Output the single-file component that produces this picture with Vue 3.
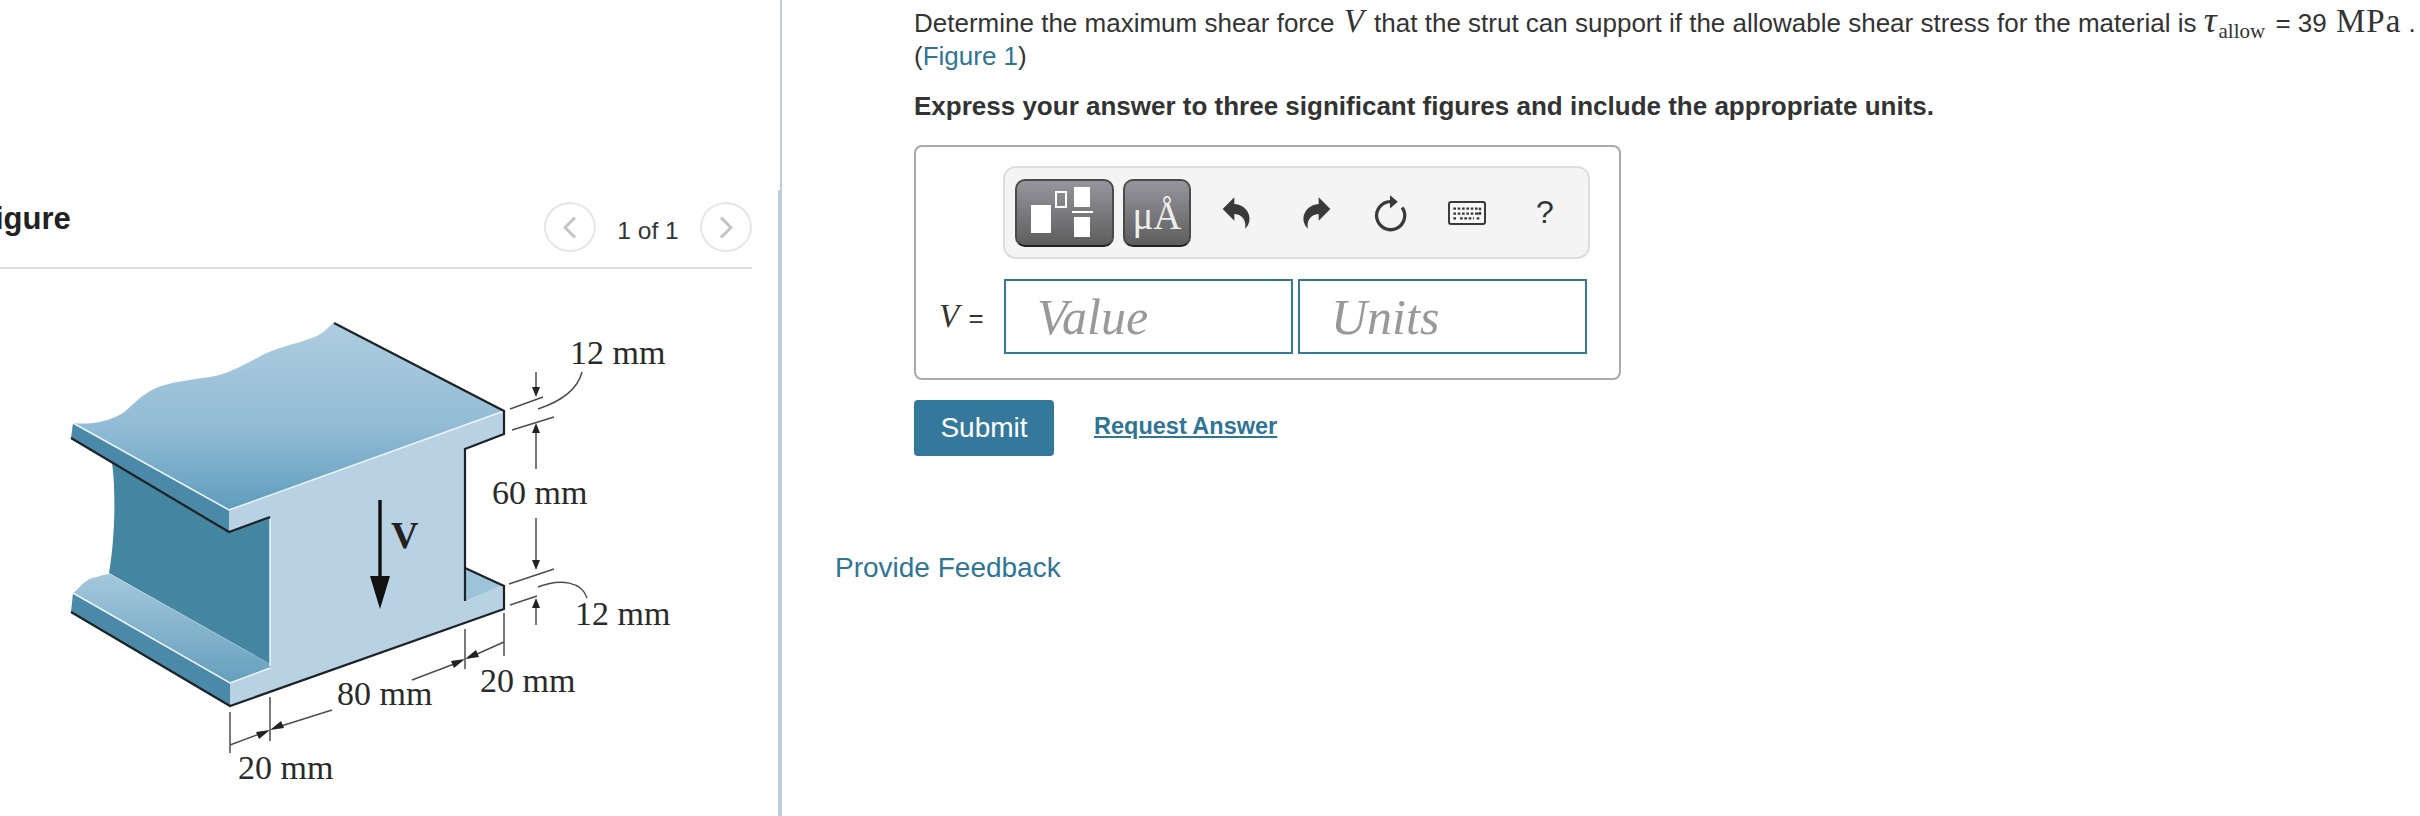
<template>
  <div class="page">
    <div class="left">
      <div class="pane">
        <div class="fig-head">
          <h2 class="fig-title">Figure</h2>
          <button class="nav prev">
            <svg width="14" height="23" viewBox="0 0 14 23"><path d="M12 1.5 2 11.5l10 10" /></svg>
          </button>
          <span class="counter">1 of 1</span>
          <button class="nav">
            <svg width="14" height="23" viewBox="0 0 14 23"><path d="M2 1.5l10 10-10 10" /></svg>
          </button>
        </div>

        <svg class="strut" width="752" height="547" viewBox="0 269 752 547">
          <defs>
            <linearGradient id="topFace" x1="0" y1="0" x2="0" y2="1">
              <stop offset="0" stop-color="#aecde0" />
              <stop offset="0.55" stop-color="#92bcd5" />
              <stop offset="1" stop-color="#5f9dbd" />
            </linearGradient>
            <linearGradient id="lowFace" x1="0" y1="0" x2="0" y2="1">
              <stop offset="0" stop-color="#a4c8dc" />
              <stop offset="1" stop-color="#659fbd" />
            </linearGradient>
          </defs>

          <!-- shaded web -->
          <path d="M112 463C116 490 115 540 109 573L270 664V517L229 532Z" fill="#44859f" />
          <!-- flange edges -->
          <path d="M73 423 229 510V532L71 438Z" fill="#4a8aa8" />
          <path d="M73 593 230 683V706L71 612Z" fill="#4a8aa8" />
          <!-- top face -->
          <path
            d="M73 423C90 425 108 422 123 413C133 405 138 398 150 391C165 382 190 380 210 377C225 375 240 367 257 358C275 347 295 345 317 336C324 332 328 328 333 323L504 411 229 510Z"
            fill="url(#topFace)"
          />
          <!-- lower flange face -->
          <path d="M73 593C80 588 85 578 97 577C102 575 106 574 110 574L270 664V669L230 683Z" fill="url(#lowFace)" />
          <path d="M465 568 504 586 465 603Z" fill="#9cc3da" />
          <!-- front -->
          <path
            d="M229 510 504 411V434L465 449V601L504 584V609L230 706V683L270 668V517L229 532Z"
            fill="#b8d1e3"
          />
          <path class="white-line" d="M73 423 229 510 504 411" />
          <path class="white-line" d="M73 593 230 683 270 668" />
          <path class="white-line" d="M270 519V666" />
          <path class="black-line" d="M71 438 229 532 270 517" />
          <path class="black-line" d="M334 323 504 411V434L465 449V601" />
          <path class="black-line" d="M465 568 504 586V609L230 706 71 612" />

          <!-- shear arrow -->
          <path d="M380 500V580" stroke="#111" stroke-width="3.4" />
          <path d="M370 576H390L380 609Z" fill="#111" />
          <text class="bold-v" x="391" y="548">V</text>

          <!-- dimension lines -->
          <g class="dim">
            <path d="M510 409 543 397M512 430 554 417M536 372V392M536 430V469M536 518V563M509 584 554 569M510 605 537 596M536 605V625" />
            <path d="M582 372C577 392 556 403 538 409M538 587C561 578 582 582 587 598" />
            <path d="M465 629V669M504 613V656M412 680 454 664M468 658 504 642M230 712V753M270 697V741M230 745 262 733M278 727 332 710" />
          </g>
          <g class="dim-head">
            <path d="M532 387H540L536 397ZM532 433H540L536 423ZM532 560H540L536 570ZM532 608H540L536 598Z" />
            <path d="M465 659 451 661 454 668ZM465 659 479 657 476 650ZM270 730 256 732 259 739ZM270 730 284 728 281 721Z" />
          </g>

          <text class="dim-label" x="570" y="364">12 mm</text>
          <text class="dim-label" x="492" y="504">60 mm</text>
          <text class="dim-label" x="575" y="625">12 mm</text>
          <text class="dim-label" x="480" y="692">20 mm</text>
          <text class="dim-label" x="337" y="705">80 mm</text>
          <text class="dim-label" x="238" y="779">20 mm</text>
        </svg>
      </div>
    </div>

    <div class="right">
      <div class="question">
        <p class="line">
          Determine the maximum shear force <i class="math big vee">V</i> that the strut can support if the allowable
          shear stress for the material is
          <span class="math"><i class="big tau">τ</i><sub>allow</sub></span><span class="equals"> = 39 </span><span class="math big unit">MPa</span> .
          <br />
          (<a class="link">Figure 1</a>)
        </p>
        <p class="instruct">Express your answer to three significant figures and include the appropriate units.</p>

        <div class="answer-box">
          <div class="toolbar">
            <button class="tool wide">
              <svg width="95" height="64" viewBox="2 2 95 64">
                <rect x="16" y="26" width="20" height="28" fill="#fff" />
                <rect x="41" y="13" width="10" height="15" fill="none" stroke="#fff" stroke-width="2" />
                <rect x="59" y="8" width="16" height="20" fill="#fff" />
                <rect x="57" y="32" width="21" height="2" fill="#fff" />
                <rect x="59" y="38" width="16" height="20" fill="#fff" />
              </svg>
            </button>
            <button class="tool units">μÅ</button>
            <svg class="ico undo" width="30" height="34" viewBox="70 75 90 100">
              <path d="M75 113 110 78V98C140 100 160 125 155 150C153 160 148 168 142 172C146 155 140 130 110 128V148Z" />
            </svg>
            <svg class="ico redo" width="30" height="34" viewBox="70 75 90 100">
              <path transform="matrix(-1 0 0 1 230 0)" d="M75 113 110 78V98C140 100 160 125 155 150C153 160 148 168 142 172C146 155 140 130 110 128V148Z" />
            </svg>
            <svg class="ico reset" width="36" height="40" viewBox="520 65 110 120">
              <path d="M576 90A43 43 0 1 0 612 108" fill="none" stroke="#3a3a3a" stroke-width="10" />
              <path d="M575 71 599 91 575 111Z" />
            </svg>
            <svg class="ico keys" width="38" height="24" viewBox="0 0 114 72">
              <rect x="3" y="3" width="108" height="66" rx="6" fill="#f8f8f8" stroke="#3a3a3a" stroke-width="6" />
              <path d="M16 23H96M16 38H88M96 20V42M84 38H96M16 52H26M36 52H78M86 52H96" fill="none" stroke="#3a3a3a" stroke-width="7" stroke-dasharray="8 5" />
            </svg>
            <span class="help">?</span>
          </div>

          <div class="inputs">
            <label class="var"><i>V</i> <span>=</span></label>
            <input class="field" placeholder="Value" />
            <input class="field" placeholder="Units" />
          </div>
        </div>

        <div class="actions">
          <button class="submit">Submit</button>
          <a class="request">Request Answer</a>
        </div>
      </div>

      <a class="feedback">Provide Feedback</a>
    </div>
  </div>
</template>

<script setup>
</script>

<style>
html,
body {
  margin: 0;
  overflow: hidden;
  background: #fff;
}
</style>

<style scoped>
.page {
  display: flex;
  width: 2420px;
  height: 816px;
  font-family: "Liberation Sans", Arial, sans-serif;
  color: #333;
  overflow: hidden;
}

.left {
  flex: none;
  width: 782px;
  box-sizing: border-box;
  border-right: 2px solid #bccde0;
  overflow: hidden;
}

.pane {
  margin-top: 190px;
  height: 626px;
  box-sizing: border-box;
  padding: 12px 26px 0 0;
  border-right: 2px solid #bccde0;
}

.fig-head {
  display: flex;
  align-items: center;
  height: 65px;
  border-bottom: 2px solid #ddd;
}

.fig-title {
  align-self: flex-start;
  margin: 0 auto 0 -24px;
  font-size: 31px;
  line-height: 34px;
  font-weight: bold;
  color: #222;
}

.nav {
  width: 52px;
  height: 50px;
  margin-bottom: 15px;
  padding: 0;
  display: flex;
  align-items: center;
  justify-content: center;
  background: #fff;
  border: 2px solid #e6e6e6;
  border-radius: 50%;
}

.nav path {
  fill: none;
  stroke: #c4c4c4;
  stroke-width: 3;
}

.counter {
  width: 104px;
  margin-bottom: 7px;
  text-align: center;
  font-size: 24.5px;
}

.strut {
  display: block;
}

.white-line {
  fill: none;
  stroke: #eef5f9;
  stroke-width: 1.5;
}

.black-line {
  fill: none;
  stroke: #1c2226;
  stroke-width: 2.2;
}

.bold-v {
  font: bold 38px "Liberation Serif", serif;
  fill: #222;
}

.dim path {
  fill: none;
  stroke: #4d4d4d;
  stroke-width: 1.5;
}

.dim-head path {
  fill: #222;
}

.dim-label {
  font: 34px "Liberation Serif", serif;
  fill: #2a2a2a;
}

.right {
  flex: 1;
  padding: 7px 0 0 53px;
  min-width: 0;
}

.question {
  margin-left: 79px;
}

.line {
  margin: 0;
  font-size: 26px;
  line-height: 32px;
  white-space: nowrap;
}

.math {
  font-family: "Liberation Serif", serif;
}

.big {
  font-size: 33px;
  line-height: 0;
}

.vee {
  margin: 0 3px 0 2px;
}

.tau {
  font-size: 36px;
  margin-right: 2px;
}

.equals {
  margin-left: 3px;
}

.unit {
  margin-left: 2px;
  letter-spacing: 1px;
}

.math sub {
  font-size: 21px;
  line-height: 0;
}

.link {
  color: #2f7596;
}

.instruct {
  margin: 19px 0 0;
  font-size: 26px;
  line-height: 31px;
  font-weight: bold;
}

.answer-box {
  width: 707px;
  height: 235px;
  margin-top: 23px;
  box-sizing: border-box;
  padding: 19px 32px 0 0;
  border: 2px solid #aaa;
  border-radius: 8px;
}

.toolbar {
  display: flex;
  align-items: center;
  width: 587px;
  height: 93px;
  margin-left: 87px;
  box-sizing: border-box;
  padding-left: 10px;
  background: #f4f4f4;
  border: 2px solid #ddd;
  border-radius: 13px;
}

.tool {
  height: 68px;
  padding: 0;
  background: linear-gradient(#96959d, #5e5e5e);
  border: 2px solid #4a4a4a;
  border-bottom-color: #222;
  border-radius: 10px;
}

.wide {
  width: 99px;
}

.wide svg {
  display: block;
}

.units {
  width: 68px;
  margin-left: 9px;
  padding-top: 6px;
  font: 39px "Liberation Serif", serif;
  color: #eee;
}

.ico {
  display: block;
  fill: #3a3a3a;
}

.undo {
  margin-left: 30px;
}

.redo {
  margin-left: 51px;
}

.reset {
  margin-left: 40px;
}

.keys {
  margin-left: 40px;
}

.help {
  margin-left: 50px;
  font-size: 32px;
  color: #333;
}

.inputs {
  display: flex;
  align-items: center;
  margin-top: 20px;
  margin-left: 23px;
}

.var {
  width: 70px;
  font-size: 26px;
}

.var i {
  font: italic 33px "Liberation Serif", serif;
  margin-right: 2px;
}

.field {
  width: 289px;
  height: 75px;
  box-sizing: border-box;
  padding: 0 0 0 31px;
  border: 2px solid #34789a;
  background: #fff;
  font: italic 50px "Liberation Serif", serif;
  outline: none;
}

.field + .field {
  margin-left: 5px;
}

.field::placeholder {
  color: #999;
  opacity: 1;
}

.actions {
  display: flex;
  align-items: center;
  margin-top: 20px;
}

.submit {
  width: 140px;
  height: 56px;
  padding: 0;
  background: #34799b;
  border: none;
  border-radius: 4px;
  color: #fff;
  font: 28px "Liberation Sans", sans-serif;
}

.request {
  margin-left: 40px;
  margin-bottom: 3px;
  font-size: 23.5px;
  font-weight: bold;
  color: #2f7596;
  text-decoration: underline;
}

.feedback {
  display: block;
  margin-top: 96px;
  font-size: 28px;
  line-height: 31px;
  color: #2f7596;
}
</style>
